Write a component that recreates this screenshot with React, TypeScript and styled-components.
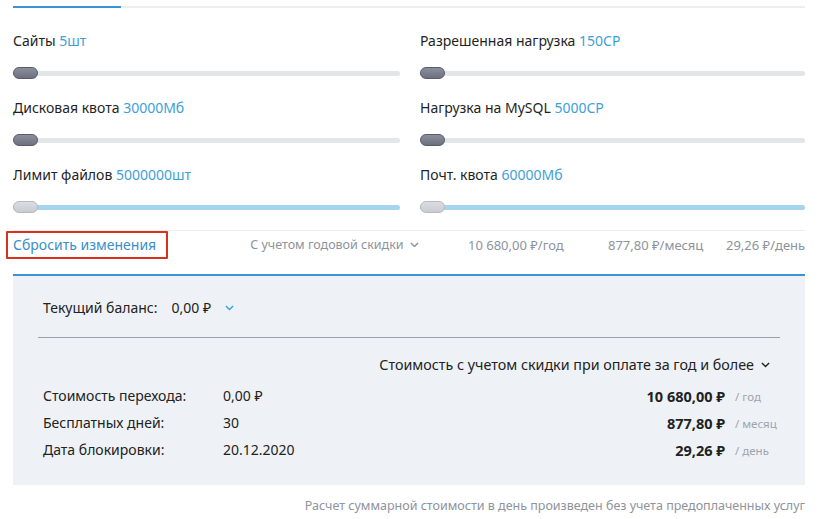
import React from "react";
import styled, { createGlobalStyle } from "styled-components";

const Global = createGlobalStyle`
  html, body { margin: 0; padding: 0; background: #fff; }
  body { font-family: "Noto Sans", "Open Sans", sans-serif; color: #222; }
  * { box-sizing: border-box; }
`;

const Page = styled.div`
  width: 818px;
  padding: 6px 13px 0 13px;
`;

const TabLine = styled.div`
  height: 2px;
  background: #eceef1;
  display: flex;
`;

const TabActive = styled.div`
  width: 108px;
  background: #3b95d4;
`;

const Grid = styled.div`
  display: grid;
  grid-template-columns: 387px 385px;
  column-gap: 20px;
  row-gap: 19px;
  padding-top: 23px;
`;

const Item = styled.div`
  display: flex;
  flex-direction: column;
  gap: 16px;
`;

const Label = styled.div`
  font-size: 14px;
  line-height: 20px;
  color: #1f1f24;
  white-space: nowrap;
`;

const Value = styled.span`
  color: #3ea0d8;
`;

const Slider = styled.div<{ $filled?: boolean }>`
  position: relative;
  height: 12px;
  display: flex;
  align-items: center;
  &::before {
    content: "";
    flex: 1;
    height: 5px;
    border-radius: 3px;
    background: ${(p) => (p.$filled ? "#a6d4ef" : "#e3e5e9")};
  }
`;

const Thumb = styled.div<{ $filled?: boolean }>`
  position: absolute;
  left: 0;
  top: 0;
  width: 25px;
  height: 12px;
  border-radius: 6px;
  background: ${(p) => (p.$filled ? "linear-gradient(#dcdde2, #c9cbd1)" : "linear-gradient(#8b8e9c, #6d7080)")};
  border: 1px solid ${(p) => (p.$filled ? "#b7b9c0" : "#585b68")};
`;

const Bar = styled.div`
  margin-top: 17px;
  border-top: 1px solid #eceef1;
  display: flex;
  align-items: center;
  height: 44px;
  padding-bottom: 16px;
`;

const ResetBox = styled.div`
  margin-left: -7px;
  height: 28px;
  padding: 0 10px 0 5px;
  border: 2px solid #d8321f;
  border-radius: 1px;
  display: flex;
  align-items: center;
`;

const ResetLink = styled.span`
  font-size: 14px;
  color: #3a8fcb;
`;

const Discount = styled.span`
  margin-left: 82px;
  font-size: 12.5px;
  color: #8e939c;
  display: flex;
  align-items: center;
  gap: 6px;
`;

const Price = styled.span<{ $w: number }>`
  font-size: 13px;
  color: #8e939c;
  width: ${(p) => p.$w}px;
  white-space: nowrap;
`;

const Spacer = styled.div`
  flex: 1;
`;

const Panel = styled.div`
  border-top: 2px solid #3b95d4;
  background: #eef2f6;
  padding: 21px 25px 22px 25px;
  height: 211px;
`;

const Balance = styled.div`
  padding-left: 5px;
  font-size: 14px;
  line-height: 22px;
  display: flex;
  align-items: center;
  gap: 14px;
  height: 22px;
  margin-bottom: 18px;
`;

const Divider = styled.div`
  height: 1px;
  background: #9ba0aa;
`;

const DiscountHead = styled.div`
  display: flex;
  justify-content: flex-end;
  align-items: center;
  gap: 7px;
  font-size: 14.3px;
  line-height: 22px;
  margin-top: 16px;
  padding-right: 10px;
  margin-bottom: 6px;
`;

const Row = styled.div`
  display: grid;
  grid-template-columns: 180px 1fr auto 55px;
  align-items: center;
  padding-left: 5px;
  font-size: 14px;
  height: 27px;
`;

const Amount = styled.span`
  font-weight: 700;
  font-size: 14.5px;
  text-align: right;
  line-height: 20px;
`;

const Unit = styled.span`
  font-size: 11.5px;
  line-height: 20px;
  color: #9ea3ac;
  padding-left: 10px;
  padding-top: 2px;
`;

const Note = styled.div`
  text-align: right;
  font-size: 12.5px;
  line-height: 18px;
  color: #8e939c;
  margin-top: 12px;
  white-space: nowrap;
`;

const Chevron = ({ color = "#3ea0d8", size = 9 }: { color?: string; size?: number }) => (
  <svg width={size} height={size * 0.6} viewBox="0 0 10 6">
    <path d="M1 1 L5 5 L9 1" fill="none" stroke={color} strokeWidth="1.6" />
  </svg>
);

const sliders: { label: string; value: string; filled?: boolean }[] = [
  { label: "Сайты", value: "5шт" },
  { label: "Разрешенная нагрузка", value: "150CP" },
  { label: "Дисковая квота", value: "30000Мб" },
  { label: "Нагрузка на MySQL", value: "5000CP" },
  { label: "Лимит файлов", value: "5000000шт", filled: true },
  { label: "Почт. квота", value: "60000Мб", filled: true },
];

const rows = [
  { label: "Стоимость перехода:", value: "0,00 ₽", amount: "10 680,00 ₽", unit: "/ год" },
  { label: "Бесплатных дней:", value: "30", amount: "877,80 ₽", unit: "/ месяц" },
  { label: "Дата блокировки:", value: "20.12.2020", amount: "29,26 ₽", unit: "/ день" },
];

export default function App() {
  return (
    <Page>
      <Global />
      <TabLine>
        <TabActive />
      </TabLine>
      <Grid>
        {sliders.map((s) => (
          <Item key={s.label}>
            <Label>
              {s.label} <Value>{s.value}</Value>
            </Label>
            <Slider $filled={s.filled}>
              <Thumb $filled={s.filled} />
            </Slider>
          </Item>
        ))}
      </Grid>
      <Bar>
        <ResetBox>
          <ResetLink>Сбросить изменения</ResetLink>
        </ResetBox>
        <Discount>
          С учетом годовой скидки <Chevron color="#8e939c" />
        </Discount>
        <Spacer />
        <Price $w={140}>10 680,00 ₽/год</Price>
        <Price $w={118}>877,80 ₽/месяц</Price>
        <Price $w={79}>29,26 ₽/день</Price>
      </Bar>
      <Panel>
        <Balance>
          <span>Текущий баланс:</span>
          <span>0,00 ₽</span>
          <Chevron />
        </Balance>
        <Divider />
        <DiscountHead>
          Стоимость с учетом скидки при оплате за год и более <Chevron color="#222" />
        </DiscountHead>
        {rows.map((r) => (
          <Row key={r.label}>
            <span>{r.label}</span>
            <span>{r.value}</span>
            <Amount>{r.amount}</Amount>
            <Unit>{r.unit}</Unit>
          </Row>
        ))}
      </Panel>
      <Note>Расчет суммарной стоимости в день произведен без учета предоплаченных услуг</Note>
    </Page>
  );
}
